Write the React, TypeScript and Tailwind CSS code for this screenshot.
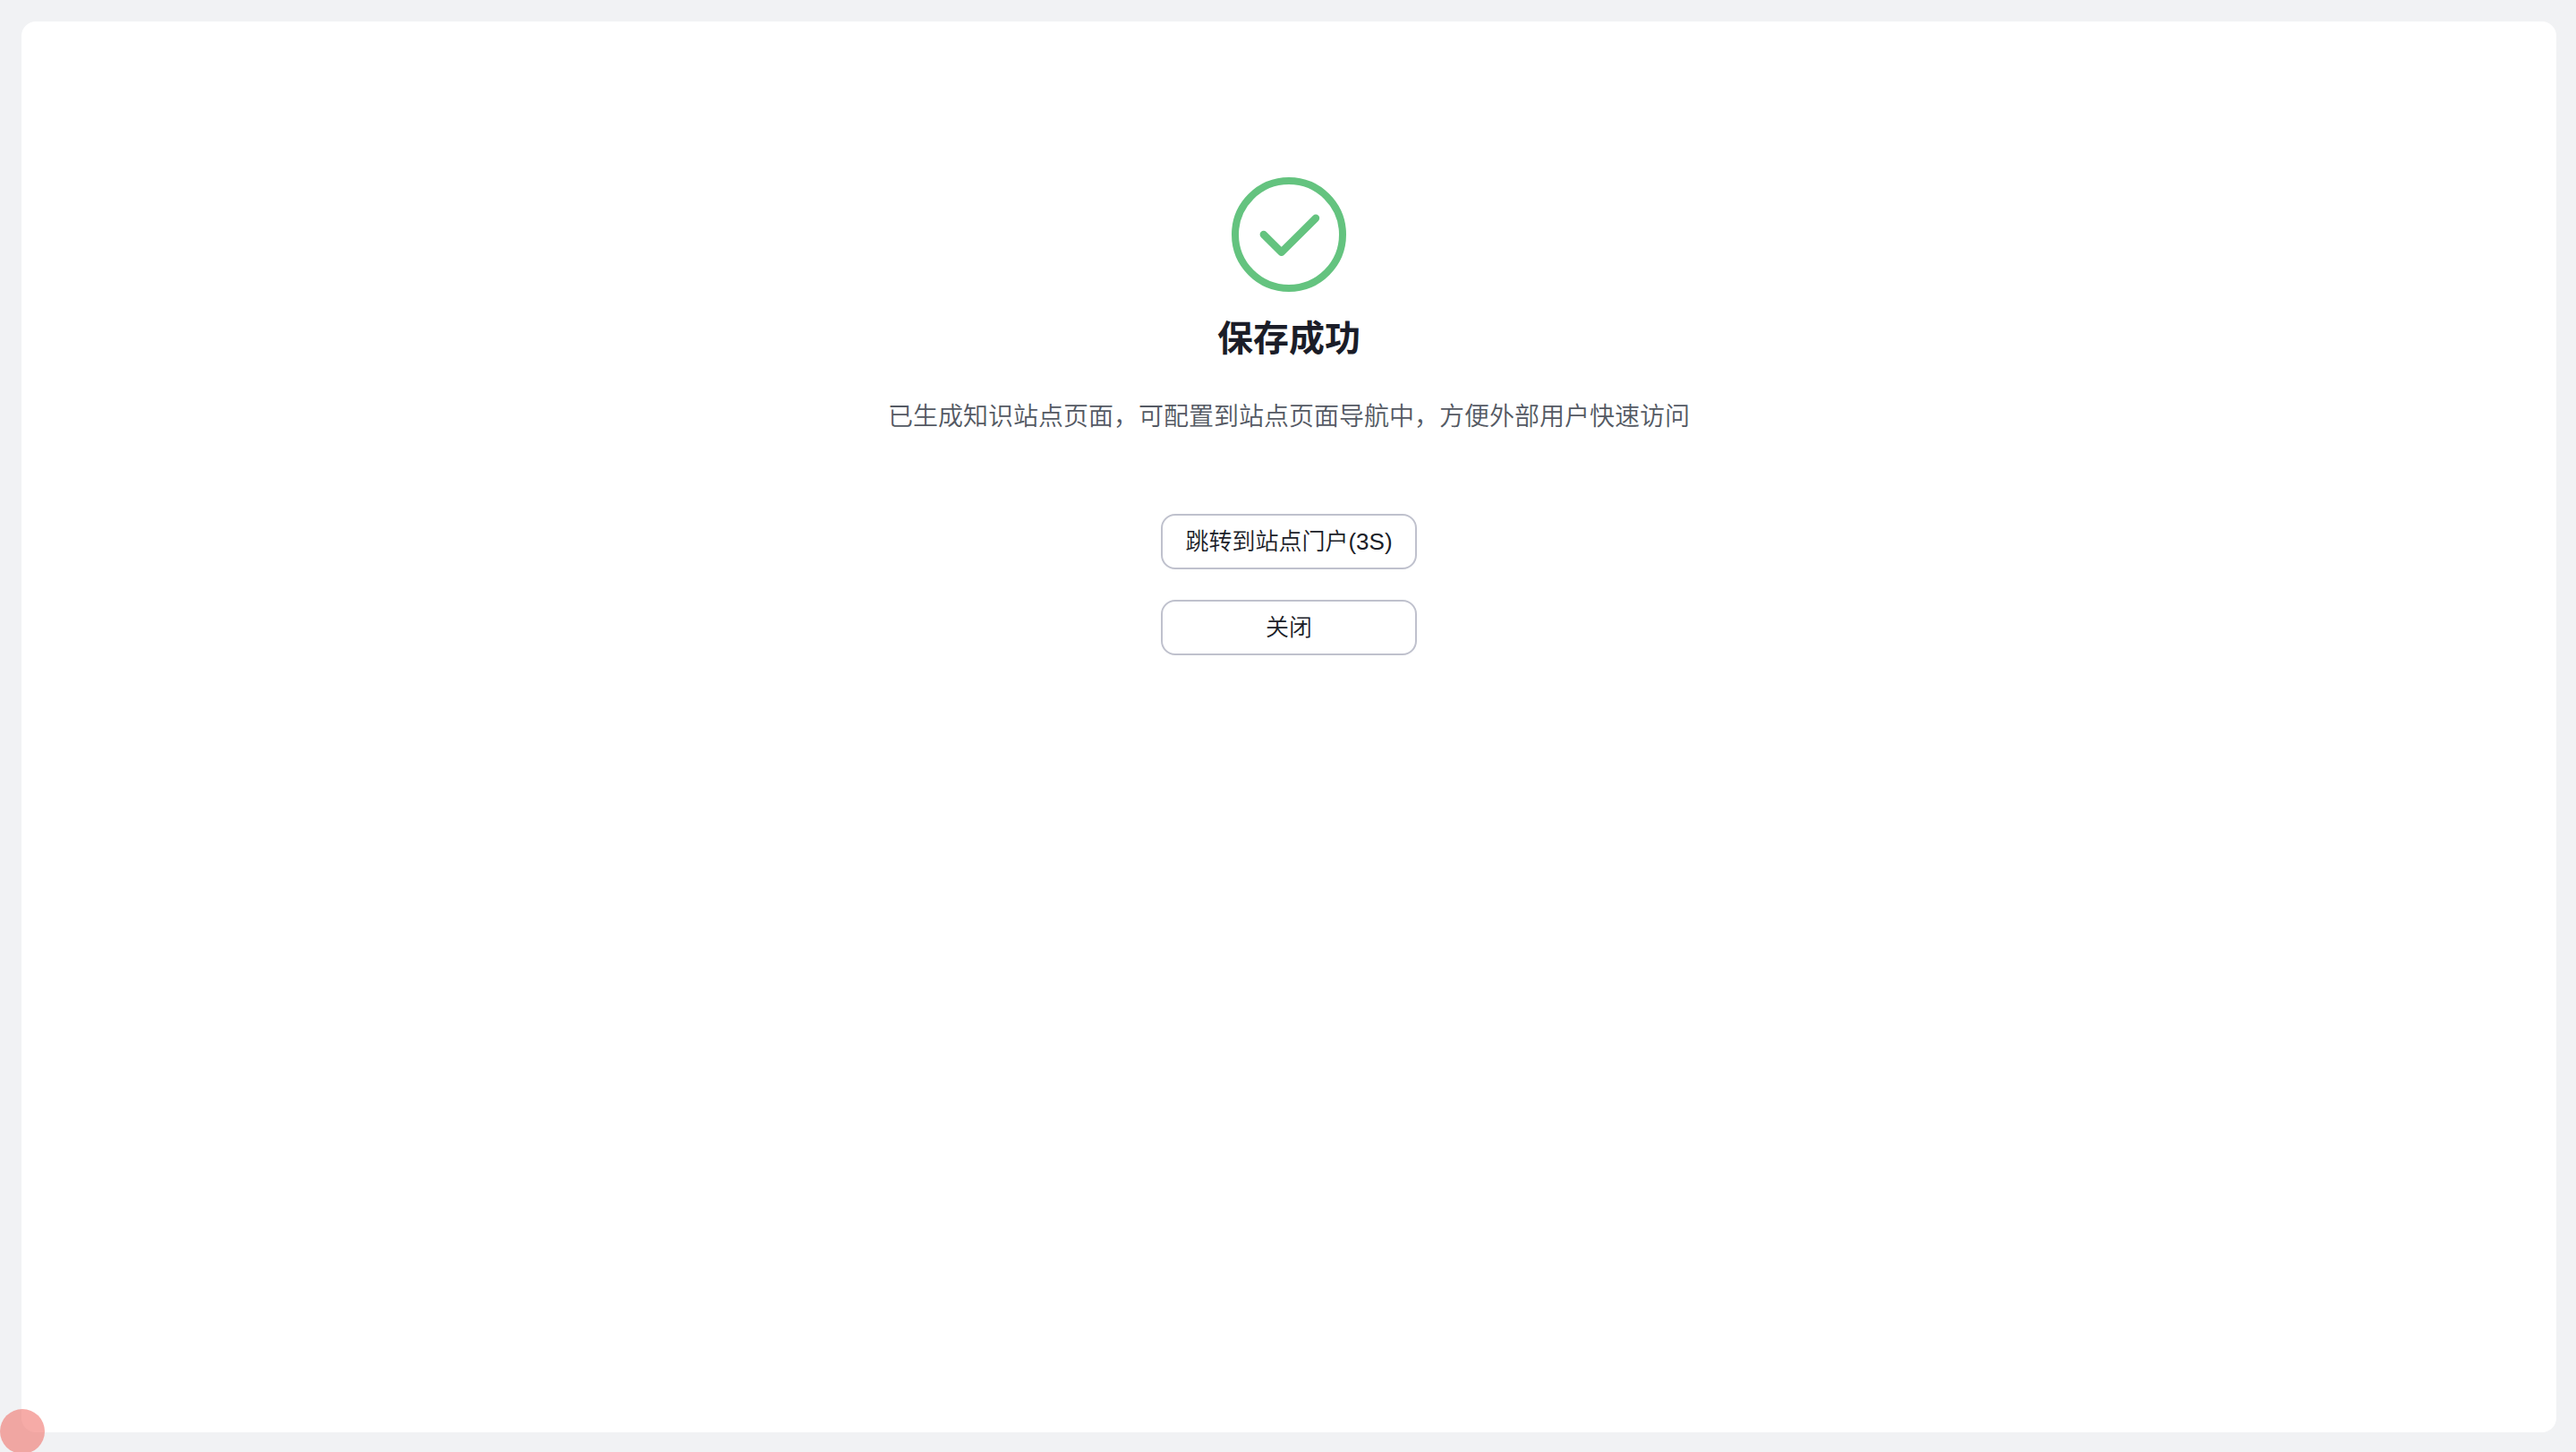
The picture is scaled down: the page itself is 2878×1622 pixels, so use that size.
import type { ReactNode } from 'react';

function SuccessIcon() {
  return (
    <svg className="h-32 w-32" viewBox="0 0 128 128" fill="none" stroke="#64c37f" strokeWidth="8">
      <circle cx="64" cy="64" r="60" />
      <path d="M35.8 64 55.7 83.8 94 45.8" strokeWidth="8.4" strokeLinecap="round" strokeLinejoin="round" />
    </svg>
  );
}

interface ActionButtonProps {
  children: ReactNode;
}

function ActionButton({ children }: ActionButtonProps) {
  return (
    <button
      type="button"
      className="flex h-[62px] w-[286px] items-center justify-center rounded-2xl border-2 border-[#bfc1cd] bg-white text-[26px] leading-none font-[350] whitespace-nowrap text-[#1b1d28]"
    >
      {children}
    </button>
  );
}

export default function App() {
  return (
    <div className="h-[1622px] w-[2878px] overflow-hidden bg-[#f1f2f4] pt-6 pr-[22px] pb-[22px] pl-6 font-['Liberation_Sans','Noto_Sans_CJK_SC',sans-serif]">
      <main className="flex h-full flex-col items-center rounded-2xl bg-white pt-[174px]">
        <SuccessIcon />
        <h1 className="mt-6 text-[40px] leading-[56px] font-semibold text-[#1b1d28]">保存成功</h1>
        <p className="mt-10 text-[28px] leading-10 font-[350] whitespace-nowrap text-[#545963]">
          已生成知识站点页面，可配置到站点页面导航中，方便外部用户快速访问
        </p>
        <div className="mt-[88px] flex flex-col gap-[34px]">
          <ActionButton>跳转到站点门户(3S)</ActionButton>
          <ActionButton>关闭</ActionButton>
        </div>
      </main>

      {/* floating dot over the bottom-left corner */}
      <div className="fixed top-[1574px] left-0 h-[50px] w-[50px] rounded-full bg-[#f06e68]/58" />
    </div>
  );
}
